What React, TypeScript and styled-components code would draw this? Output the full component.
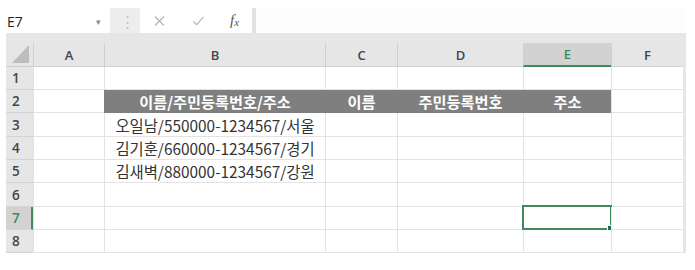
import React from "react";
import styled, { createGlobalStyle, css } from "styled-components";

const GlobalStyle = createGlobalStyle`
  html, body {
    margin: 0;
    padding: 0;
    background: #ffffff;
  }
  body {
    font-family: "Noto Sans CJK KR", "Noto Sans", sans-serif;
  }
`;

const GREEN = "#3f8a5c";

const columns = [
  { key: "A", width: 71 },
  { key: "B", width: 221 },
  { key: "C", width: 72 },
  { key: "D", width: 126 },
  { key: "E", width: 88 },
  { key: "F", width: 72 },
];

const rowHeights = [23, 23, 24, 23, 23, 24, 23, 23];

const cells: Record<string, string> = {
  B2: "이름/주민등록번호/주소",
  C2: "이름",
  D2: "주민등록번호",
  E2: "주소",
  B3: "오일남/550000-1234567/서울",
  B4: "김기훈/660000-1234567/경기",
  B5: "김새벽/880000-1234567/강원",
};

const titleCells = ["B2", "C2", "D2", "E2"];
const activeCol = "E";
const activeRow = 7;

const App = () => {
  return (
    <>
      <GlobalStyle />
      <Window>
        <FormulaBar>
          <NameBox>
            <span>E7</span>
            <Caret>▾</Caret>
          </NameBox>
          <Grip>⋮</Grip>
          <Buttons>
            <BarIcon viewBox="0 0 12 12">
              <path d="M1.5 1.5 L10.5 10.5 M10.5 1.5 L1.5 10.5" stroke="#b5b5b5" strokeWidth="1.2" fill="none" />
            </BarIcon>
            <BarIcon viewBox="0 0 14 12">
              <path d="M1.5 6.5 L5 10 L12.5 1.5" stroke="#b5b5b5" strokeWidth="1.3" fill="none" />
            </BarIcon>
            <Fx>
              f<sub>x</sub>
            </Fx>
          </Buttons>
          <Divider />
          <FormulaInput />
        </FormulaBar>

        <Sheet>
          <HeaderRow>
            <Corner>
              <svg width="17" height="18" viewBox="0 0 17 18">
                <polygon points="17,0 17,18 0,18" fill="#bdbdbd" />
              </svg>
            </Corner>
            {columns.map((c) => (
              <ColHeader key={c.key} $width={c.width} $active={c.key === activeCol}>
                {c.key}
              </ColHeader>
            ))}
          </HeaderRow>

          {rowHeights.map((h, i) => {
            const r = i + 1;
            return (
              <Row key={r} $height={h}>
                <RowHeader $active={r === activeRow}>{r}</RowHeader>
                {columns.map((c) => {
                  const id = `${c.key}${r}`;
                  const title = titleCells.includes(id);
                  return (
                    <Cell key={id} $width={c.width} $title={title}>
                      {cells[id]}
                      {c.key === activeCol && r === activeRow && (
                        <Selection>
                          <Handle />
                        </Selection>
                      )}
                    </Cell>
                  );
                })}
              </Row>
            );
          })}
        </Sheet>
      </Window>
    </>
  );
};

export default App;

const Window = styled.div`
  width: 680px;
  padding: 8px 0 0 6px;
`;

const FormulaBar = styled.div`
  display: flex;
  height: 25px;
  background: #ffffff;
`;

const NameBox = styled.div`
  width: 104px;
  box-sizing: border-box;
  display: flex;
  align-items: center;
  justify-content: space-between;
  padding: 2px 9px 0 1px;
  font-family: "Open Sans", "Noto Sans", sans-serif;
  font-size: 14px;
  color: #222;
`;

const Caret = styled.span`
  font-size: 9px;
  color: #8a8a8a;
`;

const Grip = styled.div`
  width: 30px;
  background: #ededed;
  color: #c2c2c2;
  font-size: 15px;
  line-height: 25px;
  padding-left: 10px;
  box-sizing: border-box;
`;

const Buttons = styled.div`
  width: 112px;
  display: flex;
  align-items: center;
  gap: 26px;
  padding-left: 13px;
  box-sizing: border-box;
`;

const BarIcon = styled.svg`
  width: 13px;
  height: 12px;
`;

const Fx = styled.span`
  font-family: "Liberation Serif", serif;
  font-style: italic;
  font-size: 15px;
  color: #5a5a5a;
  margin-left: -1px;

  sub {
    font-size: 11px;
    vertical-align: -1px;
  }
`;

const Divider = styled.div`
  width: 4px;
  background: #e2e2e2;
`;

const FormulaInput = styled.div`
  flex: 1;
  background: #fdfdfd;
`;

const Sheet = styled.div`
  background: #e6e6e6;
  padding-top: 10px;
  width: 680px;
  font-family: "Noto Sans CJK KR", "Noto Sans", sans-serif;
`;

const HeaderRow = styled.div`
  display: flex;
  height: 24px;
`;

const Corner = styled.div`
  width: 27px;
  display: flex;
  align-items: flex-end;
  justify-content: flex-end;
  padding: 0 4px 3px 0;
  box-sizing: border-box;
  border-bottom: 1px solid #cfcfcf;
`;

const ColHeader = styled.div<{ $width: number; $active: boolean }>`
  width: ${(p) => p.$width}px;
  box-sizing: border-box;
  display: flex;
  align-items: center;
  justify-content: center;
  font-family: "Open Sans", "Noto Sans", sans-serif;
  font-size: 13px;
  font-weight: 600;
  color: #444;
  border-left: 1px solid #cfcfcf;
  border-bottom: 1px solid #cfcfcf;
  ${(p) =>
    p.$active &&
    css`
      background: #d2d2d2;
      color: ${GREEN};
      border-bottom: 2px solid ${GREEN};
    `}
`;

const Row = styled.div<{ $height: number }>`
  display: flex;
  height: ${(p) => p.$height}px;
`;

const RowHeader = styled.div<{ $active: boolean }>`
  width: 27px;
  box-sizing: border-box;
  display: flex;
  align-items: center;
  padding-left: 6px;
  font-family: "Open Sans", "Noto Sans", sans-serif;
  font-size: 13.5px;
  font-weight: 600;
  color: #444;
  border-bottom: 1px solid #d4d4d4;
  ${(p) =>
    p.$active &&
    css`
      background: #d2d2d2;
      color: ${GREEN};
      border-right: 2px solid ${GREEN};
    `}
`;

const Cell = styled.div<{ $width: number; $title: boolean }>`
  position: relative;
  width: ${(p) => p.$width}px;
  box-sizing: border-box;
  display: flex;
  align-items: center;
  justify-content: center;
  white-space: nowrap;
  background: #ffffff;
  border-left: 1px solid #e3e3e3;
  border-bottom: 1px solid #e3e3e3;
  font-size: 15.4px;
  color: #333;
  ${(p) =>
    p.$title &&
    css`
      background: #7f7f7f;
      border-left-color: #7f7f7f;
      border-bottom-color: #7f7f7f;
      color: #ffffff;
      font-weight: 700;
      font-size: 15.2px;
    `}
`;

const Selection = styled.div`
  position: absolute;
  left: -2px;
  top: -2px;
  right: -1px;
  bottom: -1px;
  border: 2px solid ${GREEN};
  pointer-events: none;
`;

const Handle = styled.div`
  position: absolute;
  right: -4px;
  bottom: -4px;
  width: 5px;
  height: 5px;
  background: #217346;
  border: 1px solid #fff;
`;
